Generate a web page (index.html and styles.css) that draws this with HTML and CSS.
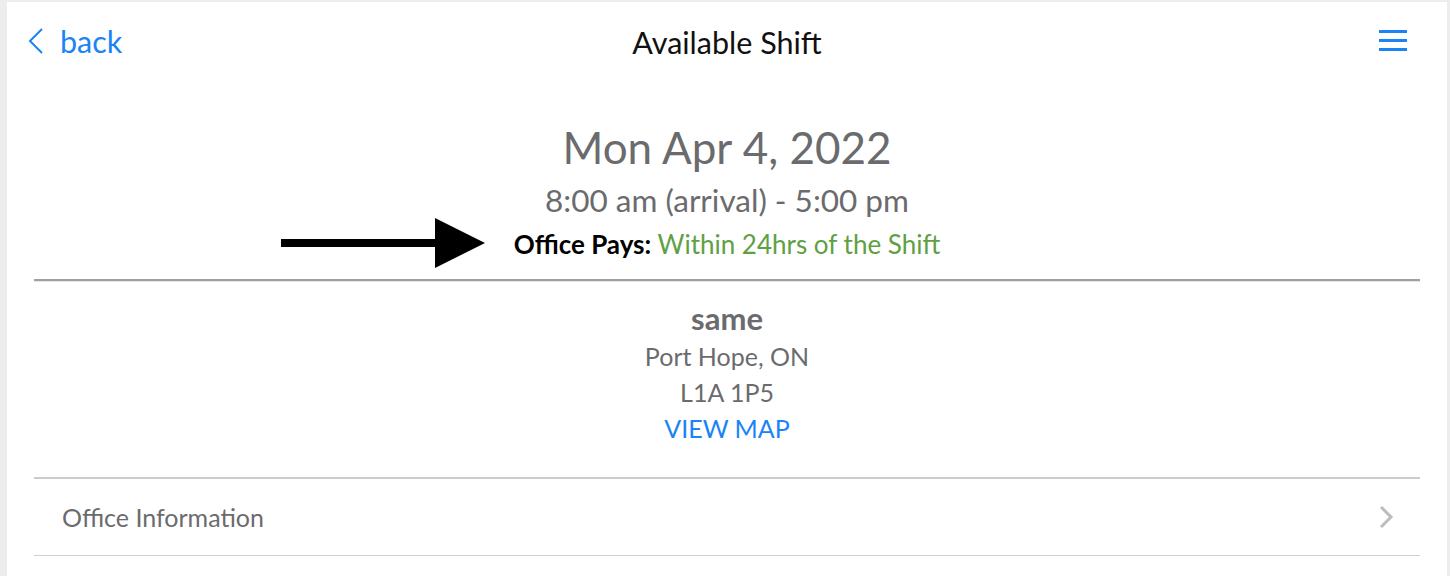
FILE: index.html
```html
<!DOCTYPE html>
<html>
<head>
<meta charset="utf-8">
<link rel="stylesheet" href="styles.css">
</head>
<body>
<div class="page">
  <header class="topbar">
    <a class="back">
      <svg class="back-icon" width="18" height="28" viewBox="0 0 18 28"><path d="M15 2 L3 14 L15 26" fill="none" stroke="#1a84f5" stroke-width="2"/></svg>
      <span>back</span>
    </a>
    <div class="title">Available Shift</div>
    <svg class="menu" width="28" height="22" viewBox="0 0 28 22"><rect x="0" y="1" width="28" height="3" fill="#1a84f5"/><rect x="0" y="10" width="28" height="3" fill="#1a84f5"/><rect x="0" y="19" width="28" height="3" fill="#1a84f5"/></svg>
  </header>
  <section class="shift">
    <div class="date">Mon Apr 4, 2022</div>
    <div class="time">8:00 am (arrival) - 5:00 pm</div>
    <div class="pays">
      <svg class="arrow" width="204" height="50" viewBox="0 0 204 50"><rect x="0" y="21" width="160" height="8" fill="#000"/><polygon points="154,0 204,25 154,50" fill="#000"/></svg>
      <b>Office Pays:</b> <span class="green">Within 24hrs of the Shift</span>
    </div>
  </section>
  <div class="rule dark"></div>
  <section class="address">
    <div class="name">same</div>
    <div>Port Hope, ON</div>
    <div>L1A 1P5</div>
    <a class="map">VIEW MAP</a>
  </section>
  <div class="rule"></div>
  <div class="row">
    <span>Office Information</span>
    <svg class="chev" width="15" height="24" viewBox="0 0 15 24"><path d="M2 2 L12 12 L2 22" fill="none" stroke="#bdbdbd" stroke-width="3"/></svg>
  </div>
  <div class="rule thin"></div>
</div>
</body>
</html>
```
FILE: styles.css
```css
html, body {
  margin: 0;
  padding: 0;
  background: #ededed;
  height: 576px;
  overflow: hidden;
}
body {
  font-family: Lato, "Open Sans", sans-serif;
}
.page {
  margin: 2px 3px 0 7px;
  background: #fff;
  height: 574px;
  padding: 0 27px;
}
.topbar {
  height: 80px;
  display: flex;
  align-items: center;
  justify-content: space-between;
  position: relative;
  margin: 0 -27px;
  padding: 0 40px 0 20px;
}
.back {
  display: flex;
  align-items: center;
  gap: 15px;
  color: #1a84f5;
  font-size: 30.5px;
  padding-bottom: 2px;
}
.title {
  position: absolute;
  left: 0;
  right: 0;
  text-align: center;
  font-size: 30.5px;
  color: #111;
  pointer-events: none;
}
.menu {
  margin-top: -4px;
}
.shift {
  text-align: center;
  color: #6b6b6e;
  padding-top: 36px;
}
.date {
  font-size: 44px;
  line-height: 58px;
}
.time {
  font-size: 31.5px;
  line-height: 48px;
}
.pays {
  font-size: 26px;
  line-height: 40px;
  color: #000;
  position: relative;
  display: inline-block;
}
.pays b {
  font-weight: 700;
}
.green {
  color: #5ea043;
}
.arrow {
  position: absolute;
  left: -233px;
  top: -6px;
}
.rule {
  height: 2px;
  background: #cccccc;
}
.rule.dark {
  margin-top: 15px;
  background: #a0a0a0;
  border-bottom: 1px solid #e4e4e4;
}
.rule.thin {
  height: 1px;
  background: #cfcfcf;
}
.address {
  text-align: center;
  color: #6b6b6e;
  font-size: 25px;
  line-height: 36px;
  padding: 17px 0 31px;
}
.address .name {
  font-weight: 700;
  font-size: 31px;
  line-height: 39px;
}
.map {
  color: #1a84f5;
  display: block;
}
.row {
  height: 76px;
  display: flex;
  align-items: center;
  justify-content: space-between;
  padding: 0 26px 0 28px;
  font-size: 25px;
  color: #6b6b6e;
}
```
